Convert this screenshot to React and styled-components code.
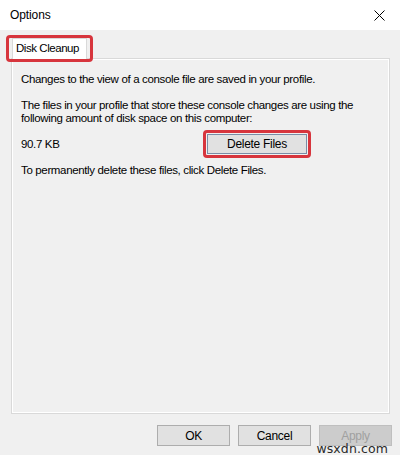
import React from 'react';
import styled, { createGlobalStyle } from 'styled-components';

const GlobalStyle = createGlobalStyle`
  html, body {
    margin: 0;
    padding: 0;
    background: #f0f0f0;
  }
  body {
    font-family: "Liberation Sans", Arial, sans-serif;
    font-size: 12px;
    color: #000;
  }
`;

const Window = styled.div`
  position: relative;
  width: 400px;
  height: 455px;
  background: #f0f0f0;
  display: flex;
  flex-direction: column;
  overflow: hidden;
`;

const TitleBar = styled.div`
  height: 30px;
  flex: none;
  background: #fff;
  display: flex;
  align-items: center;
  justify-content: space-between;
  padding: 0 10px 0 10px;
  box-sizing: border-box;
  font-size: 12px;
  letter-spacing: -0.1px;
`;

const CloseButton = styled.span`
  display: flex;
  align-items: center;
  justify-content: center;
  width: 20px;
  height: 20px;
  margin-right: 1px;
`;

const Body = styled.div`
  flex: 1;
  display: flex;
  flex-direction: column;
  padding: 8px 10px 0 11px;
`;

const TabStrip = styled.div`
  display: flex;
  height: 20px;
  padding-left: 1px;
`;

const Tab = styled.div`
  position: relative;
  width: 75px;
  height: 21px;
  background: #fff;
  border: 1px solid #d9d9d9;
  border-bottom: none;
  box-sizing: border-box;
  padding: 3px 0 0 3px;
  font-size: 11.5px;
  letter-spacing: -0.45px;
  z-index: 1;

  ${({ $marked }) => $marked && `
    &::after {
      content: '';
      position: absolute;
      left: -7px;
      top: -4px;
      width: 87px;
      height: 27px;
      border: 3px solid #d7353d;
      border-radius: 4px;
      box-sizing: border-box;
      pointer-events: none;
    }
  `}
`;

const Panel = styled.div`
  height: 356px;
  box-sizing: border-box;
  border: 1px solid #d9d9d9;
  box-shadow: inset 1px 1px 0 #fff, inset -1px -1px 0 #fff;
  padding: 14px 9px 0 9px;
  display: flex;
  flex-direction: column;
  gap: 13px;
  font-size: 11.5px;
  line-height: 13px;
  letter-spacing: -0.35px;
`;

const Text = styled.p`
  margin: 0;
`;

const SizeRow = styled.div`
  display: grid;
  grid-template-columns: 186px auto;
  align-items: center;
  margin: -4px 0 -3.5px;
`;

const Button = styled.button`
  position: relative;
  width: ${({ $w }) => $w}px;
  height: ${({ $h }) => $h || 21}px;
  padding: 0;
  border: 1px solid;
  font-family: "Liberation Sans", Arial, sans-serif;
  font-size: 12px;
  letter-spacing: -0.3px;
  color: ${({ disabled }) => (disabled ? '#a0a0a0' : '#000')};
  background: ${({ disabled }) => (disabled ? '#cccccc' : '#e1e1e1')};
  border-color: ${({ disabled, $focus }) =>
    disabled ? '#bfbfbf' : $focus ? '#7a8ca6' : '#adadad'};

  ${({ $marked }) => $marked && `
    &::after {
      content: '';
      position: absolute;
      left: -5px;
      top: -5px;
      right: -5px;
      bottom: -5px;
      border: 3px solid #d7353d;
      border-radius: 4px;
      pointer-events: none;
    }
  `}
`;

const Footer = styled.div`
  display: flex;
  justify-content: flex-end;
  gap: 8px;
  padding: 11px 7px 0 0;
  margin-right: -9px;
`;

const Watermark = styled.span`
  position: absolute;
  right: 12px;
  bottom: -1px;
  font-family: "DejaVu Sans", sans-serif;
  font-size: 12.5px;
  color: #2a2a2a;
  letter-spacing: 0.1px;
`;

export default function App() {
  return (
    <Window>
      <GlobalStyle />
      <TitleBar>
        <span>Options</span>
        <CloseButton>
          <svg width="11" height="11" viewBox="0 0 11 11">
            <path d="M0.5 0.5 L10.5 10.5 M10.5 0.5 L0.5 10.5" stroke="#000" strokeWidth="1" fill="none" />
          </svg>
        </CloseButton>
      </TitleBar>
      <Body>
        <TabStrip>
          <Tab $marked>Disk Cleanup</Tab>
        </TabStrip>
        <Panel>
          <Text>Changes to the view of a console file are saved in your profile.</Text>
          <Text>
            The files in your profile that store these console changes are using the
            <br />
            following amount of disk space on this computer:
          </Text>
          <SizeRow>
            <span>90.7 KB</span>
            <Button $w={100} $h={20} $focus $marked>Delete Files</Button>
          </SizeRow>
          <Text>To permanently delete these files, click Delete Files.</Text>
        </Panel>
        <Footer>
          <Button $w={73}>OK</Button>
          <Button $w={73}>Cancel</Button>
          <Button $w={73} disabled>Apply</Button>
        </Footer>
      </Body>
      <Watermark>wsxdn.com</Watermark>
    </Window>
  );
}
